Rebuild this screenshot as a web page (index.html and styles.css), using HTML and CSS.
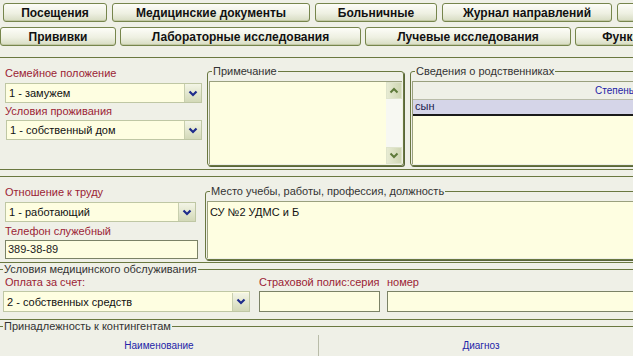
FILE: index.html
```html
<!DOCTYPE html>
<html lang="ru">
<head>
    <meta charset="UTF-8">
    <title>Карта пациента</title>
    <link rel="stylesheet" href="styles.css">
</head>
<body>
    <div class="page">
        <nav class="tabs">
            <div class="tab-row row-top">
                <button class="tab w-visits">Посещения</button>
                <button class="tab w-meddocs">Медицинские документы</button>
                <button class="tab w-sick">Больничные</button>
                <button class="tab w-journal">Журнал направлений</button>
                <button class="tab w-more" title="Ещё"></button>
            </div>
            <div class="tab-row row-bottom">
                <button class="tab w-vacc">Прививки</button>
                <button class="tab w-lab">Лабораторные исследования</button>
                <button class="tab w-ray">Лучевые исследования</button>
                <button class="tab w-func">Функциональные</button>
            </div>
        </nav>

        <section class="panel panel-family">
            <div class="col-left">
                <div class="lbl">Семейное положение</div>
                <div class="combo combo-family">
                    <span class="combo-text">1 - замужем</span>
                    <span class="combo-btn"><svg width="10" height="7" viewBox="0 0 10 7"><polyline points="1.5,1.5 5,5 8.5,1.5" fill="none" stroke="#1f2c8c" stroke-width="2.2"/></svg></span>
                </div>
                <div class="lbl lbl-second">Условия проживания</div>
                <div class="combo combo-home">
                    <span class="combo-text">1 - собственный дом</span>
                    <span class="combo-btn"><svg width="10" height="7" viewBox="0 0 10 7"><polyline points="1.5,1.5 5,5 8.5,1.5" fill="none" stroke="#1f2c8c" stroke-width="2.2"/></svg></span>
                </div>
            </div>

            <fieldset class="group group-note">
                <legend>Примечание</legend>
                <div class="memo">
                    <div class="memo-text"></div>
                    <div class="scroll">
                        <span class="scroll-btn"><svg width="10" height="7" viewBox="0 0 10 7"><polyline points="1.5,5.5 5,2 8.5,5.5" fill="none" stroke="#5e7a3a" stroke-width="2"/></svg></span>
                        <span class="scroll-track"></span>
                        <span class="scroll-btn"><svg width="10" height="7" viewBox="0 0 10 7"><polyline points="1.5,1.5 5,5 8.5,1.5" fill="none" stroke="#5e7a3a" stroke-width="2"/></svg></span>
                    </div>
                </div>
            </fieldset>

            <fieldset class="group group-relatives">
                <legend>Сведения о родственниках</legend>
                <div class="grid">
                    <div class="grid-head">
                        <span class="head-cell head-degree">Степень</span>
                    </div>
                    <div class="grid-row selected">сын</div>
                    <div class="grid-empty"></div>
                </div>
            </fieldset>
        </section>

        <section class="panel panel-work">
            <div class="col-left">
                <div class="lbl">Отношение к труду</div>
                <div class="combo combo-work">
                    <span class="combo-text">1 - работающий</span>
                    <span class="combo-btn"><svg width="10" height="7" viewBox="0 0 10 7"><polyline points="1.5,1.5 5,5 8.5,1.5" fill="none" stroke="#1f2c8c" stroke-width="2.2"/></svg></span>
                </div>
                <div class="lbl lbl-phone">Телефон служебный</div>
                <div class="edit edit-phone">389-38-89</div>
            </div>

            <fieldset class="group group-job">
                <legend>Место учебы, работы, профессия, должность</legend>
                <div class="memo memo-job">СУ №2 УДМС и Б</div>
            </fieldset>
        </section>

        <fieldset class="band band-service">
            <legend>Условия медицинского обслуживания</legend>
            <div class="service-row">
                <div class="field f-pay">
                    <div class="lbl">Оплата за счет:</div>
                    <div class="combo combo-pay">
                        <span class="combo-text">2 - собственных средств</span>
                        <span class="combo-btn"><svg width="10" height="7" viewBox="0 0 10 7"><polyline points="1.5,1.5 5,5 8.5,1.5" fill="none" stroke="#1f2c8c" stroke-width="2.2"/></svg></span>
                    </div>
                </div>
                <div class="field f-series">
                    <div class="lbl">Страховой полис:серия</div>
                    <div class="edit"></div>
                </div>
                <div class="field f-number">
                    <div class="lbl">номер</div>
                    <div class="edit"></div>
                </div>
            </div>
        </fieldset>

        <fieldset class="band band-contingent">
            <legend>Принадлежность к контингентам</legend>
            <div class="table-head">
                <span class="th th-name">Наименование</span>
                <span class="th th-diag">Диагноз</span>
            </div>
            <div class="table-row"></div>
        </fieldset>
    </div>
</body>
</html>
```

FILE: styles.css
```css
html, body { margin: 0; padding: 0; overflow: hidden; background-color: #eff0e7; }
body { font-family: 'Liberation Sans', Arial, sans-serif; font-size: 11px; color: #1a1a1a; }
.page { width: 700px; }

/* tab buttons */
.tabs { padding-top: 3px; height: 54px; }
.tab-row { display: flex; gap: 5px; height: 19px; }
.row-top { padding-left: 3px; }
.row-bottom { margin-top: 5px; gap: 4px; }
.tab { height: 19px; padding: 0; font-family: inherit; font-size: 12px; font-weight: bold; color: #111; border: 1px solid #76854c; border-radius: 3px; background: linear-gradient(#fdfdf8, #eef0e2 55%, #d7dcc2); box-shadow: inset 0 -1px 0 #c3c9a6; flex-shrink: 0; white-space: nowrap; overflow: hidden; }
.w-visits { width: 104px; }
.w-meddocs { width: 198px; }
.w-sick { width: 122px; }
.w-journal { width: 170px; }
.w-more { width: 130px; }
.w-vacc { width: 116px; }
.w-lab { width: 241px; }
.w-ray { width: 206px; }
.w-func { width: 160px; }

/* panels */
.panel { display: flex; align-items: flex-start; border-top: 1px solid #6a7840; border-bottom: 1px solid #6a7840; }
.panel-family { padding-top: 8px; box-sizing: border-box; height: 113px; }
.panel-work { margin-top: 6px; height: 87px; box-sizing: border-box; padding-top: 8px; }

.col-left { margin-left: 5px; margin-top: 1px; }
.panel-family .col-left { width: 197px; }
.panel-work .col-left { width: 194px; }

.lbl { color: #9b2335; line-height: 13px; height: 13px; white-space: nowrap; }
.combo { display: flex; align-items: center; height: 20px; box-sizing: border-box; border: 1px solid #bfc7a4; background-color: #fefee1; margin-top: 3px; }
.combo-text { flex: 1; padding-left: 3px; white-space: nowrap; color: #111; }
.combo-btn { width: 16px; height: 18px; display: flex; align-items: center; justify-content: center; background: linear-gradient(#f3f5e6, #d3d9b8); border-left: 1px solid #c8cfae; }
.lbl-second { margin-top: 2px; }
.combo-home { margin-top: 2px; margin-left: 1px; }
.combo-work { width: 191px; }
.lbl-phone { margin-top: 3px; }
.edit { height: 19px; box-sizing: border-box; border: 1px solid #7b8266; background-color: #fefee1; line-height: 17px; padding-left: 2px; margin-top: 2px; }
.edit-phone { width: 193px; }

/* group boxes */
.group { margin: 0; padding: 0 1px 1px; border: 1px solid #6a7840; border-radius: 3px; box-shadow: 1px 1px 0 #58643a; }
.group legend, .band legend { padding: 0 1px; margin-left: 3px; line-height: 11px; color: #333; font-size: 11px; }
.group-note { width: 197px; margin-left: 5px; box-sizing: border-box; }
.group-relatives { margin-left: 6px; flex: 1; margin-right: -20px; }
.memo { display: flex; height: 83px; margin-top: 4px; background-color: #fefee1; border-top: 1px solid #9aa07e; border-left: 1px solid #9aa07e; box-sizing: border-box; }
.memo-text { flex: 1; }
.scroll { width: 16px; display: flex; flex-direction: column; }
.scroll-btn { height: 17px; display: flex; align-items: center; justify-content: center; background: linear-gradient(90deg, #e7ebd3, #cfd6b3); border: 1px solid #dfe4cc; box-sizing: border-box; }
.scroll-track { flex: 1; background-color: #f7f8f2; }

.grid { margin-top: 4px; height: 83px; background-color: #fefee1; border-top: 1px solid #9aa07e; border-left: 1px solid #9aa07e; box-sizing: border-box; }
.grid-head { height: 17px; background-color: #eff0e7; border-bottom: 1px solid #b9bca9; display: flex; }
.head-cell { color: #2424a8; font-size: 10px; line-height: 17px; }
.head-degree { margin-left: 182px; }
.grid-row { height: 14px; line-height: 13px; padding-left: 2px; color: #1c1c50; background-color: #d5d5e8; border-bottom: 2px solid #1a1a1a; }

.group-job { flex: 1; margin-left: 6px; margin-top: 1px; margin-right: -20px; }
.memo-job { display: block; height: 57px; padding: 4px 0 0 2px; color: #111; }

/* bottom bands */
.band { margin: 0; padding: 0; border: none; border-top: 1px solid #6a7840; border-bottom: 1px solid #6a7840; }
.band-service { margin-top: 1px; height: 56px; box-sizing: border-box; }
.service-row { display: flex; padding-left: 3px; margin-top: 1px; }
.field .lbl { line-height: 13px; }
.field .combo, .field .edit { margin-top: 2px; height: 21px; }
.f-pay { width: 247px; }
.f-pay .lbl { padding-left: 2px; }
.f-series { width: 121px; margin-left: 9px; }
.f-number { width: 300px; margin-left: 7px; }

.band-contingent { margin-top: 1px; }
.table-head { display: flex; height: 21px; border-bottom: 2px solid #1a1a1a; margin-top: 3px; }
.th { color: #2424a8; font-size: 10px; line-height: 21px; text-align: center; }
.th-name { width: 318px; border-right: 1px solid #b9bca9; }
.th-diag { width: 324px; }
.table-row { height: 20px; background-color: #d5d5e8; }
```
